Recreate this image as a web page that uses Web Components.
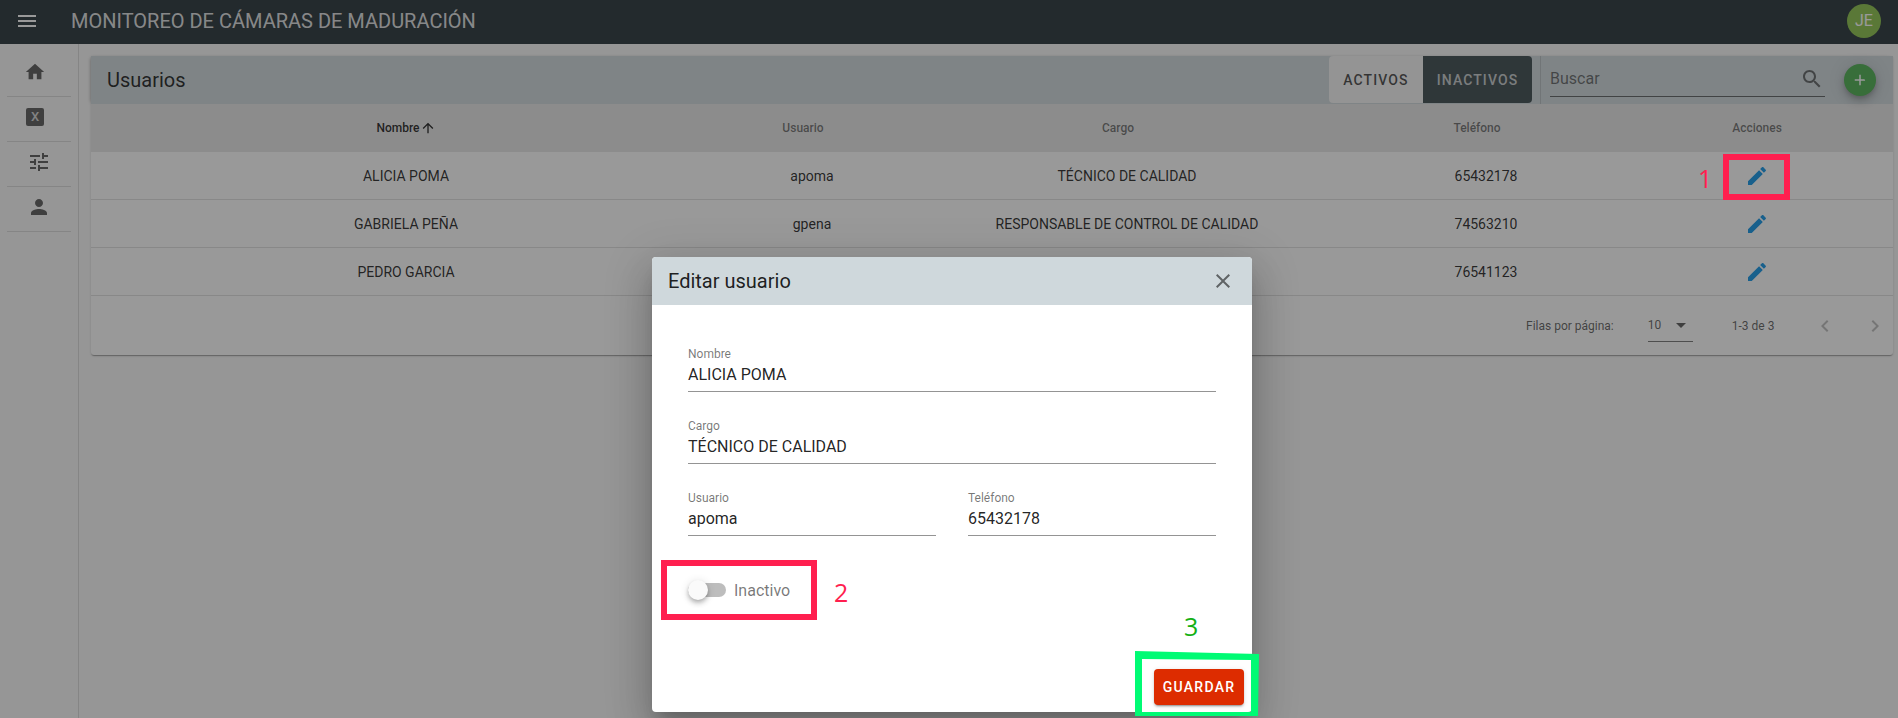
<!doctype html>
<html lang="es">
<head>
<meta charset="utf-8">
<title>Usuarios</title>
<style>
  html,body{margin:0;height:718px;overflow:hidden;background:#fafafa;font-family:Roboto,sans-serif;}
</style>
</head>
<body>
<app-shell></app-shell>
<script>
(() => {
  'use strict';

  const ICONS = {
    menu: 'M3 18h18v-2H3v2zm0-5h18v-2H3v2zm0-7v2h18V6H3z',
    home: 'M10 20v-6h4v6h5v-8h3L12 3 2 12h3v8z',
    tune: 'M3 17v2h6v-2H3zM3 5v2h10V5H3zm10 16v-2h8v-2h-8v-2h-2v6h2zM7 9v2H3v2h4v2h2V9H7zm14 4v-2H11v2h10zm-6-4h2V7h4V5h-4V3h-2v6z',
    person: 'M12 12c2.21 0 4-1.79 4-4s-1.79-4-4-4-4 1.79-4 4 1.79 4 4 4zm0 2c-2.67 0-8 1.34-8 4v2h16v-2c0-2.66-5.33-4-8-4z',
    edit: 'M3 17.25V21h3.75L17.81 9.94l-3.75-3.75L3 17.25zM20.71 7.04c.39-.39.39-1.02 0-1.41l-2.34-2.34c-.39-.39-1.02-.39-1.41 0l-1.83 1.83 3.75 3.75 1.83-1.83z',
    search: 'M15.5 14h-.79l-.28-.27C15.41 12.59 16 11.11 16 9.5 16 5.91 13.09 3 9.5 3S3 5.91 3 9.5 5.91 16 9.5 16c1.61 0 3.09-.59 4.23-1.57l.27.28v.79l5 4.99L20.49 19l-4.99-5zm-6 0C7.01 14 5 11.99 5 9.5S7.01 5 9.5 5 14 7.01 14 9.5 11.99 14 9.5 14z',
    close: 'M19 6.41L17.59 5 12 10.59 6.41 5 5 6.41 10.59 12 5 17.59 6.41 19 12 13.41 17.59 19 19 17.59 13.41 12z',
    up: 'M4 12l1.41 1.41L11 7.83V20h2V7.83l5.58 5.59L20 12l-8-8-8 8z',
    left: 'M15.41 7.41L14 6l-6 6 6 6 1.41-1.41L10.83 12z',
    right: 'M10 6L8.59 7.41 13.17 12l-4.58 4.59L10 18l6-6z',
    drop: 'M7 10l5 5 5-5z',
    plus: 'M19 13h-6v6h-2v-6H5v-2h6V5h2v6h5z'
  };

  // ---------- ui-icon ----------
  class UiIcon extends HTMLElement {
    connectedCallback() {
      const size = this.getAttribute('size') || 24;
      const d = ICONS[this.getAttribute('name')] || '';
      this.attachShadow({ mode: 'open' }).innerHTML = `
        <style>:host{display:inline-flex;width:${size}px;height:${size}px;flex:none} svg{display:block;fill:currentColor}</style>
        <svg width="${size}" height="${size}" viewBox="0 0 24 24"><path d="${d}"/></svg>`;
    }
  }
  customElements.define('ui-icon', UiIcon);

  // ---------- app-bar ----------
  class AppBar extends HTMLElement {
    constructor() {
      super();
      this.attachShadow({ mode: 'open' }).innerHTML = `
        <style>
          :host{display:flex;align-items:center;height:44px;background:#263238;color:#fff;padding:0 17px 3px 15px;box-sizing:border-box}
          .title{margin-left:32px;font-size:20px;color:rgba(255,255,255,.87);flex:1;white-space:nowrap}
          .avatar{width:34px;height:34px;border-radius:50%;background:#8bc34a;display:grid;place-items:center;font-size:16px;color:#fff}
        </style>
        <ui-icon name="menu" size="24"></ui-icon>
        <div class="title"><slot></slot></div>
        <div class="avatar">JE</div>`;
    }
  }
  customElements.define('app-bar', AppBar);

  // ---------- side-nav ----------
  class SideNav extends HTMLElement {
    constructor() {
      super();
      this.attachShadow({ mode: 'open' }).innerHTML = `
        <style>
          :host{display:block;width:79px;flex:none;box-sizing:border-box;border-right:1px solid rgba(0,0,0,.12);padding:8px 7px 0;color:rgba(0,0,0,.64)}
          .item{height:45px;box-sizing:border-box;border-bottom:1px solid rgba(0,0,0,.12);display:flex;align-items:center;padding:0 0 4px 17px}
          .item.first{height:44.5px}
          .item.in{padding-left:20px}
          .xl{width:18px;height:18px;margin-left:2px;border-radius:2px;background:rgba(0,0,0,.64);display:grid;place-items:center;font:500 13px Roboto,sans-serif;color:#d4d4d4}
        </style>
        <div class="item first"><ui-icon name="home" size="22"></ui-icon></div>
        <div class="item"><div class="xl">X</div></div>
        <div class="item in"><ui-icon name="tune" size="24"></ui-icon></div>
        <div class="item in"><ui-icon name="person" size="24"></ui-icon></div>`;
    }
  }
  customElements.define('side-nav', SideNav);

  // ---------- users-table ----------
  const COLS = '630px 182px 448px 270px 272px';
  const ROWS = [
    ['ALICIA POMA', 'apoma', 'TÉCNICO DE CALIDAD', '65432178'],
    ['GABRIELA PEÑA', 'gpena', 'RESPONSABLE DE CONTROL DE CALIDAD', '74563210'],
    ['PEDRO GARCIA', 'pgarcia', 'TÉCNICO DE CALIDAD', '76541123']
  ];

  class UsersTable extends HTMLElement {
    constructor() {
      super();
      this.attachShadow({ mode: 'open' }).innerHTML = `
        <style>
          :host{display:block;background:#fff;border-radius:0 0 3px 3px;box-shadow:0 2px 1px -1px rgba(0,0,0,.2),0 1px 1px rgba(0,0,0,.14),0 1px 3px rgba(0,0,0,.12);color:rgba(0,0,0,.87)}
          .bar{display:flex;align-items:center;height:48px;background:#cfd8dc;padding:0 17px 0 16px;box-shadow:-2px 0 4px -2px rgba(0,0,0,.3)}
          .name{font-size:20px;flex:1}
          .toggle{display:flex;height:47px;align-self:flex-start;margin-right:8px}
          .toggle span{display:grid;place-items:center;font-size:14px;font-weight:500;letter-spacing:1.1px;box-sizing:border-box;height:47px}
          .on{width:94px;background:#f5f5f5;color:rgba(0,0,0,.72);border-radius:4px 0 0 4px}
          .off{width:109px;background:#3c4a4f;color:rgba(255,255,255,.72);border-radius:0 4px 4px 0}
          .search{width:275px;height:48px;border-left:1px solid rgba(0,0,0,.12);padding-left:9px;display:flex;flex:none}
          .input{flex:1;height:41px;display:flex;align-items:center;justify-content:space-between;border-bottom:1px solid rgba(0,0,0,.55);font-size:16px;color:rgba(0,0,0,.54);padding:5px 1px 0 0;box-sizing:border-box}
          .input ui-icon{color:rgba(0,0,0,.54)}
          .fab{width:32px;height:32px;border-radius:50%;background:#4caf50;color:#fff;display:grid;place-items:center;margin-left:19px;flex:none;box-shadow:0 3px 5px -1px rgba(0,0,0,.2),0 6px 10px rgba(0,0,0,.14),0 1px 18px rgba(0,0,0,.12)}
          .row{display:grid;grid-template-columns:${COLS};height:48px;align-items:center;text-align:center;font-size:14px;box-sizing:border-box;border-bottom:1px solid rgba(0,0,0,.12)}
          .head{background:#e8e8e8;font-size:12px;font-weight:500;color:rgba(0,0,0,.54);border-bottom:0}
          .head .sorted{color:rgba(0,0,0,.87);display:inline-flex;align-items:center;justify-content:center;padding-right:0}
          .head > span{padding-right:18px}
          .head > span.last{padding-right:0}
          .act{color:#1296e8;display:flex;justify-content:center}
          .foot{height:59px;display:flex;align-items:center;font-size:12px;color:rgba(0,0,0,.65);white-space:nowrap}
          .foot .sp{width:1435px;flex:none}
          .sel{width:45px;margin-left:34px;height:33px;box-sizing:border-box;border-bottom:1px solid rgba(0,0,0,.54);display:flex;align-items:center;justify-content:space-between;flex:none}
          .range{margin-left:39px;width:81px;flex:none}
          .nav{color:rgba(0,0,0,.26);display:flex;gap:26px}
        </style>
        <div class="bar">
          <div class="name">Usuarios</div>
          <div class="toggle"><span class="on">ACTIVOS</span><span class="off">INACTIVOS</span></div>
          <div class="search"><div class="input"><span>Buscar</span><ui-icon name="search" size="24"></ui-icon></div></div>
          <div class="fab"><ui-icon name="plus" size="18"></ui-icon></div>
        </div>
        <div class="row head">
          <span class="sorted">Nombre<ui-icon name="up" size="16"></ui-icon></span>
          <span>Usuario</span><span>Cargo</span><span>Teléfono</span><span class="last">Acciones</span>
        </div>
        ${ROWS.map(r => `<div class="row">${r.map(c => `<span>${c}</span>`).join('')}<span class="act"><ui-icon name="edit" size="24"></ui-icon></span></div>`).join('')}
        <div class="foot">
          <div class="sp"></div>
          <span>Filas por página:</span>
          <div class="sel"><span>10</span><ui-icon name="drop" size="24"></ui-icon></div>
          <span class="range">1-3 de 3</span>
          <div class="nav"><ui-icon name="left" size="24"></ui-icon><ui-icon name="right" size="24"></ui-icon></div>
        </div>`;
    }
  }
  customElements.define('users-table', UsersTable);

  // ---------- text-field ----------
  class TextField extends HTMLElement {
    connectedCallback() {
      this.attachShadow({ mode: 'open' }).innerHTML = `
        <style>
          :host{display:block;height:46px;box-sizing:border-box;border-bottom:1px solid rgba(0,0,0,.42);padding-top:1px}
          .l{display:block;font-size:12px;line-height:14px;color:rgba(0,0,0,.54)}
          .v{display:block;font-size:16px;line-height:20px;margin-top:4px;color:rgba(0,0,0,.87)}
        </style>
        <span class="l">${this.getAttribute('label')}</span>
        <span class="v"><slot></slot></span>`;
    }
  }
  customElements.define('text-field', TextField);

  // ---------- edit-dialog ----------
  class EditDialog extends HTMLElement {
    constructor() {
      super();
      this.attachShadow({ mode: 'open' }).innerHTML = `
        <style>
          :host{display:flex;flex-direction:column;position:absolute;left:652px;top:257px;width:600px;height:455px;background:#fff;border-radius:4px;overflow:hidden;
            box-shadow:0 11px 15px -7px rgba(0,0,0,.2),0 24px 38px 3px rgba(0,0,0,.14),0 9px 46px 8px rgba(0,0,0,.12);color:rgba(0,0,0,.87)}
          .head{height:48px;flex:none;background:#cfd8dc;display:flex;align-items:center;justify-content:space-between;padding:0 17px 0 16px;font-size:20px}
          .close{color:rgba(0,0,0,.54)}
          .body{flex:1;padding:41px 36px 0;display:flex;flex-direction:column;gap:26px}
          .two{display:grid;grid-template-columns:248px 248px;justify-content:space-between}
          .sw{display:flex;align-items:center;font-size:16px;color:rgba(0,0,0,.54);margin-top:16px;height:24px}
          .track{width:38px;height:14px;border-radius:7px;background:rgba(0,0,0,.26);position:relative;margin-right:8px}
          .knob{position:absolute;left:0;top:-3px;width:20px;height:20px;border-radius:50%;background:#fafafa;box-shadow:0 2px 4px -1px rgba(0,0,0,.2),0 4px 5px rgba(0,0,0,.14),0 1px 10px rgba(0,0,0,.12)}
          .foot{flex:none;display:flex;justify-content:flex-end;padding:0 8px 7px 0}
          .save{width:90px;height:36px;display:grid;place-items:center;background:#dd2c00;color:#fff;border-radius:4px;font-size:14px;font-weight:500;letter-spacing:1.25px;box-shadow:0 3px 1px -2px rgba(0,0,0,.2),0 2px 2px rgba(0,0,0,.14),0 1px 5px rgba(0,0,0,.12)}
        </style>
        <div class="head"><span>Editar usuario</span><ui-icon class="close" name="close" size="24"></ui-icon></div>
        <div class="body">
          <text-field label="Nombre">ALICIA POMA</text-field>
          <text-field label="Cargo">TÉCNICO DE CALIDAD</text-field>
          <div class="two">
            <text-field label="Usuario">apoma</text-field>
            <text-field label="Teléfono">65432178</text-field>
          </div>
          <div class="sw"><div class="track"><div class="knob"></div></div>Inactivo</div>
        </div>
        <div class="foot"><div class="save">GUARDAR</div></div>`;
    }
  }
  customElements.define('edit-dialog', EditDialog);

  // ---------- mark-box: annotation frames painted on the screenshot ----------
  class MarkBox extends HTMLElement {
    connectedCallback() {
      const [x, y, w, h] = this.getAttribute('rect').split(',');
      const c = this.getAttribute('color');
      const poly = this.getAttribute('poly');
      const look = poly
        ? `background:${c};clip-path:polygon(evenodd,${poly})`
        : `border:6px solid ${c}`;
      this.attachShadow({ mode: 'open' }).innerHTML = `
        <style>:host{position:absolute;left:${x}px;top:${y}px;width:${w}px;height:${h}px;box-sizing:border-box;pointer-events:none;${look}}</style>`;
    }
  }
  customElements.define('mark-box', MarkBox);

  class MarkNum extends HTMLElement {
    connectedCallback() {
      const [x, y] = this.getAttribute('at').split(',');
      this.attachShadow({ mode: 'open' }).innerHTML = `
        <style>:host{position:absolute;left:${x}px;top:${y}px;font:400 25px/28px "Open Sans",sans-serif;color:${this.getAttribute('color')}}</style><slot></slot>`;
    }
  }
  customElements.define('mark-num', MarkNum);

  // ---------- app-shell ----------
  class AppShell extends HTMLElement {
    constructor() {
      super();
      this.attachShadow({ mode: 'open' }).innerHTML = `
        <style>
          :host{display:flex;flex-direction:column;height:718px;position:relative;overflow:hidden;font-family:Roboto,sans-serif}
          .main{flex:1;display:flex}
          .content{flex:1;padding:12px 5px 0 12px;min-width:0}
          .scrim{position:absolute;inset:0;background:#212121;opacity:.46}
        </style>
        <app-bar>MONITOREO DE CÁMARAS DE MADURACIÓN</app-bar>
        <div class="main">
          <side-nav></side-nav>
          <div class="content"><users-table></users-table></div>
        </div>
        <div class="scrim"></div>
        <edit-dialog></edit-dialog>
        <mark-box rect="1723,154,67,46" color="#ff1f4f"></mark-box>
        <mark-box rect="661,560,156,60" color="#ff1f4f"></mark-box>
        <mark-box rect="1134,651,126,66" color="#00fb74"
          poly="1px 0,125px 3px,124px 65px,1px 65px,1px 0,8px 8px,8px 61px,117px 61px,117px 9px,8px 8px"></mark-box>
        <mark-num at="1698,164" color="#ff1f4f">1</mark-num>
        <mark-num at="834,578" color="#ff1f4f">2</mark-num>
        <mark-num at="1184,612" color="#14b014">3</mark-num>`;
    }
  }
  customElements.define('app-shell', AppShell);
})();
</script>
</body>
</html>
